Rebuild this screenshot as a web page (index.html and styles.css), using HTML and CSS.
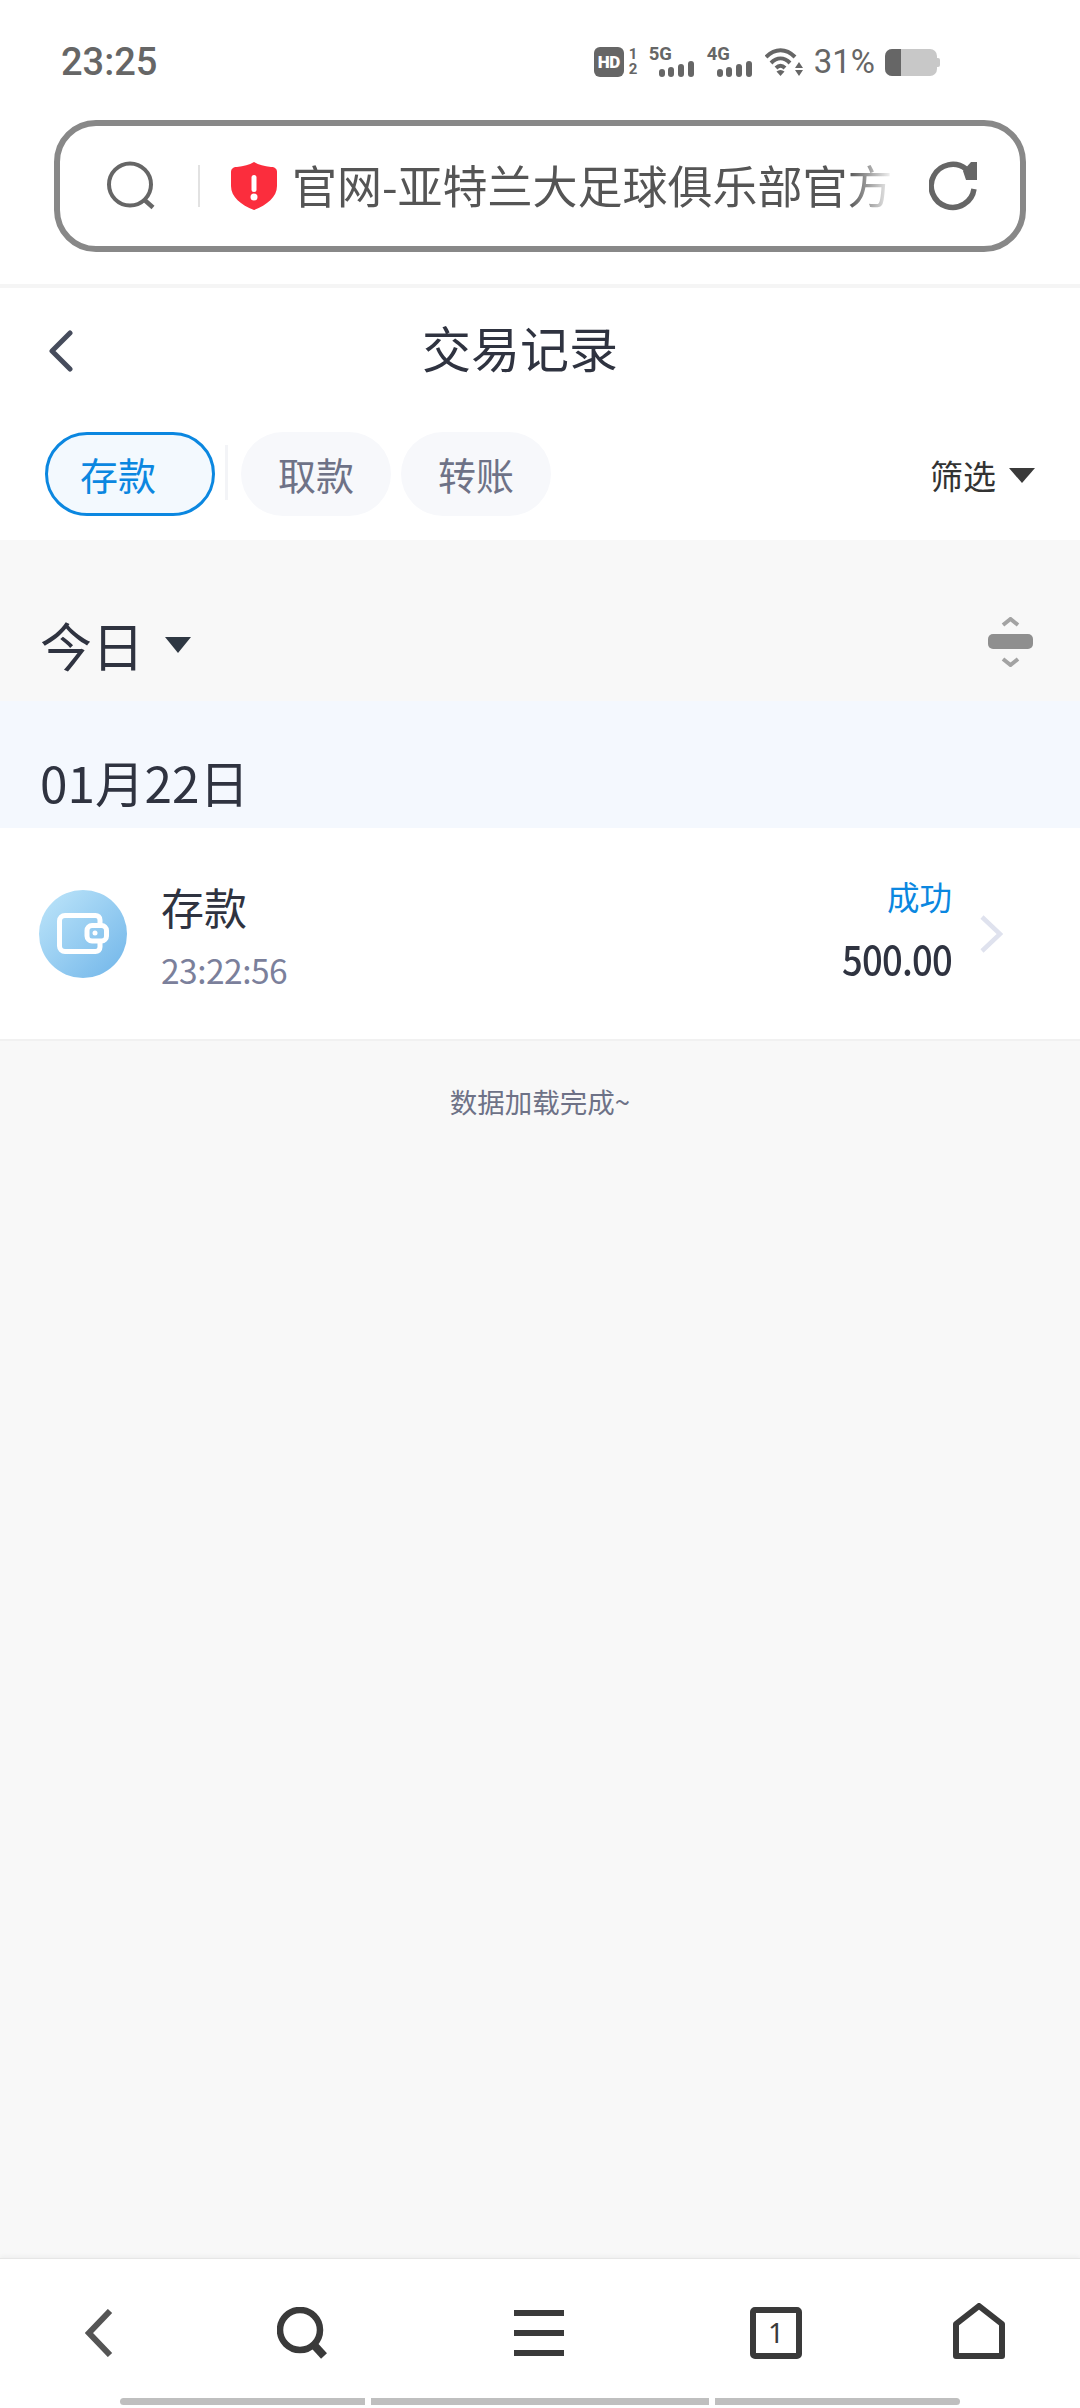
FILE: index.html
```html
<!DOCTYPE html>
<html lang="zh-CN">
<head>
<meta charset="utf-8">
<title>交易记录</title>
<link rel="stylesheet" href="styles.css">
</head>
<body>
<div class="page">
  <header class="status">
    <span class="clock">23:25</span>
    <div class="status-icons">
      <span class="hd">HD</span>
      <span class="sims"><span>1</span><span>2</span></span>
      <span class="net net-first"><span class="net-label">5G</span>
        <svg class="net-bars" width="35" height="16" viewBox="0 0 35 16"><rect x="0" y="8" width="6" height="8" rx="3"/><rect x="9" y="6" width="6" height="10" rx="3"/><rect x="19" y="3" width="6" height="13" rx="3"/><rect x="29" y="0" width="6" height="16" rx="3"/></svg></span>
      <span class="net net-second"><span class="net-label">4G</span>
        <svg class="net-bars" width="35" height="16" viewBox="0 0 35 16"><rect x="0" y="8" width="6" height="8" rx="3"/><rect x="9" y="6" width="6" height="10" rx="3"/><rect x="19" y="3" width="6" height="13" rx="3"/><rect x="29" y="0" width="6" height="16" rx="3"/></svg></span>
      <svg class="wifi" width="38" height="30" viewBox="0 0 38 30" fill="none" stroke="#666" stroke-width="4"><path d="M1 10C10 1 21 1 30 10"/><path d="M6 16C12 10 19 10 25 16"/><path d="M11 21C14 18 17 18 20 21"/><path d="M15.500 29L11.500 24.500C14 22.500 17 22.500 19.500 24.500Z" fill="#666" stroke="none"/><path d="M34 15L38 21H30ZM34 29L30 23H38Z" fill="#666" stroke="none"/></svg>
      <span class="battery-pct">31%</span>
      <span class="battery"><span class="battery-fill"></span></span>
    </div>
  </header>

  <div class="url-wrap">
    <div class="url-bar">
      <svg class="url-search" width="50" height="50" viewBox="0 0 50 50" fill="none" stroke="#666" stroke-width="4"><circle cx="23" cy="23.500" r="21"/><path d="M37 38.500L46 46.500" stroke-width="4.500"/></svg>
      <span class="url-divider"></span>
      <svg class="shield" width="46" height="50" viewBox="0 0 46 50"><path d="M23 1C28 4 33 5 40 6C44 6 46 8 46 11V25C46 36 36 44 23 49C10 44 0 36 0 25V11C0 8 2 6 6 6C13 5 18 4 23 1Z" fill="#fb2d3d"/><rect x="20.500" y="14" width="5" height="17" rx="2.500" fill="#fff"/><circle cx="23" cy="36" r="3.500" fill="#fff"/></svg>
      <span class="url-text">官网-亚特兰大足球俱乐部官方</span>
      <svg class="reload" width="50" height="52" viewBox="0 0 50 52" fill="none" stroke="#666" stroke-width="5.500"><path d="M45 29A21.500 21.500 0 1 1 37 9"/><path d="M42 2H48V20H37L34 11Z" fill="#666" stroke="none"/></svg>
    </div>
  </div>
  <div class="sep"></div>

  <nav class="nav">
    <svg class="nav-back" width="26" height="42" viewBox="0 0 26 42" fill="none" stroke="#464c5c" stroke-width="5" stroke-linecap="round" stroke-linejoin="round"><path d="M22 3L4 21L22 39"/></svg>
    <h1 class="title">交易记录</h1>
  </nav>

  <section class="tabs">
    <span class="tab tab-active">存款</span>
    <span class="tab-divider"></span>
    <span class="tab">取款</span>
    <span class="tab tab-last">转账</span>
    <span class="filter">筛选<i class="tri tri-filter"></i></span>
  </section>

  <main class="content">
    <div class="range">
      <span class="range-label">今日</span><i class="tri tri-range"></i>
      <svg class="collapse" width="45" height="50" viewBox="0 0 45 50"><rect x="0" y="17" width="45" height="15" rx="5" fill="#8f8f8f"/><path d="M15 8L22.500 2L30 8M15 42L22.500 48L30 42" fill="none" stroke="#a3a3a3" stroke-width="4"/></svg>
    </div>
    <div class="date-band">01月22日</div>
    <div class="record">
      <div class="record-icon">
        <svg width="52" height="41" viewBox="0 0 52 41" fill="none" stroke="#fff" stroke-width="5"><path d="M43 11V7C43 4 41 2.500 38.500 2.500H8C5 2.500 2.500 5 2.500 8V33C2.500 36 5 38.500 8 38.500H38.500C41 38.500 43 37 43 34V30"/><rect x="30" y="12.500" width="19.500" height="15.500" rx="5"/><circle cx="38" cy="20" r="2.500" fill="#fff" stroke="none"/></svg>
      </div>
      <div class="record-main">
        <span class="record-name">存款</span>
        <span class="record-time">23:22:56</span>
      </div>
      <div class="record-side">
        <span class="record-state">成功</span>
        <span class="record-amount">500.00</span>
      </div>
      <svg class="record-arrow" width="24" height="38" viewBox="0 0 24 38" fill="none" stroke="#dfe2ee" stroke-width="4.500"><path d="M3 2L21 19L3 36"/></svg>
    </div>
    <p class="done">数据加载完成~</p>
  </main>

  <footer class="toolbar">
    <div class="tool-row">
      <svg width="28" height="48" viewBox="0 0 28 48" fill="none" stroke="#555" stroke-width="6"><path d="M25 2L4 24L25 46"/></svg>
      <svg width="52" height="52" viewBox="0 0 52 52" fill="none" stroke="#3a3a3a" stroke-width="6.500"><circle cx="23" cy="23" r="20"/><path d="M37 38L47 49" stroke-width="8"/></svg>
      <svg width="50" height="46" viewBox="0 0 50 46" fill="#3a3a3a"><rect width="50" height="6"/><rect y="20" width="50" height="6"/><rect y="40" width="50" height="6"/></svg>
      <span class="tabs-count">1</span>
      <svg class="tool-home" width="52" height="56" viewBox="0 0 52 56" fill="none" stroke="#3a3a3a" stroke-width="6" stroke-linejoin="round"><path d="M26 3L49 21V53H3V21Z"/></svg>
    </div>
    <div class="scroll">
      <span class="scroll-a"></span><span class="scroll-b"></span><span class="scroll-c"></span>
    </div>
  </footer>
</div>
</body>
</html>
```
FILE: styles.css
```css
* { box-sizing: border-box; }
html, body { margin: 0; padding: 0; }
body { font-family: "Noto Sans CJK SC", "Noto Sans", sans-serif; background: #fff; }
.page { width: 1080px; height: 2408px; display: flex; flex-direction: column; overflow: hidden; background: #f8f8f8; }

.status { height: 120px; background: #fff; display: flex; align-items: center; justify-content: space-between; padding: 4px 140px 0 61px; font-family: Roboto, sans-serif; color: #666; }
.clock { font-size: 38px; font-weight: 500; }
.status-icons { display: flex; align-items: center; flex: none; }
.hd { width: 30px; height: 30px; border-radius: 6px; background: #666; color: #fff; font-size: 17px; font-weight: 900; line-height: 30px; text-align: center; letter-spacing: -.5px; flex: none; }
.sims { display: flex; flex-direction: column; margin-left: 5px; width: 10px; font-size: 15px; font-weight: 700; line-height: 15px; flex: none; }
.net { position: relative; display: block; width: 45px; height: 30px; flex: none; }
.net-first { margin-left: 10px; }
.net-second { margin-left: 13px; }
.net-label { position: absolute; left: 0; top: -3px; font-size: 18.500px; font-weight: 700; line-height: 20px; }
.net-bars { position: absolute; left: 10px; bottom: 0; fill: #666; }
.wifi { margin-left: 13px; flex: none; }
.battery-pct { margin-left: 11px; font-size: 33px; font-weight: 400; line-height: 34px; }
.battery { position: relative; margin: 0 3px 0 10px; width: 52px; height: 27px; border-radius: 7px; background: #c8c8c8; flex: none; }
.battery::after { content: ""; position: absolute; right: -3px; top: 9px; width: 3px; height: 9px; border-radius: 0 2px 2px 0; background: #c8c8c8; }
.battery-fill { display: block; width: 16px; height: 100%; background: #666; border-radius: 7px 0 0 7px; }

.url-wrap { height: 164px; background: #fff; padding: 0 54px; }
.url-bar { height: 132px; border: 6px solid #888; border-radius: 42px; display: flex; align-items: center; padding-left: 47px; background: #fff; }
.url-search { flex: none; }
.url-divider { width: 2px; height: 42px; background: #e2e2e2; margin-left: 41px; flex: none; }
.shield { margin-left: 31px; flex: none; }
.url-text { width: 612px; margin: -2px 0 0 15px; white-space: nowrap; font-size: 45px; line-height: 60px; color: #555; -webkit-mask-image: linear-gradient(to right, #000 91%, rgba(0,0,0,.05) 98%); mask-image: linear-gradient(to right, #000 91%, rgba(0,0,0,.05) 98%); flex: none; }
.reload { margin-left: 25px; flex: none; }
.sep { height: 4px; background: #f5f5f5; }

.nav { height: 126px; background: #fff; display: flex; align-items: center; position: relative; padding-left: 48px; }
.title { width: 196px; margin: 0 0 8px 348px; font-size: 49px; font-weight: 400; line-height: 60px; color: #2f3340; white-space: nowrap; }
.nav-back { flex: none; }

.tabs { height: 126px; background: #fff; display: flex; align-items: flex-start; padding: 18px 45px 0 45px; }
.tab { width: 150px; height: 84px; border-radius: 42px; background: #f7f8fb; color: #6e7287; font-size: 38px; line-height: 84px; text-align: center; }
.tab-active { width: 170px; border: 3px solid #0b87e0; background: #f3f9fe; color: #0b87e0; line-height: 78px; padding-right: 24px; }
.tab-divider { width: 3px; height: 55px; margin: 13px 13px 0 10px; background: #f3f4f7; }
.tab-last { margin-left: 10px; }
.filter { margin-left: auto; margin-top: 19px; font-size: 33px; line-height: 48px; color: #333; display: flex; align-items: center; }
.tri { display: block; width: 0; height: 0; border-style: solid; border-color: transparent; }
.tri-filter { margin-left: 13px; border-width: 15px 13px 0; border-top-color: #3a3a3a; }

.content { flex: 1; display: flex; flex-direction: column; }
.range { height: 161px; display: flex; align-items: center; padding: 49px 47px 0 40px; position: relative; }
.range-label { font-size: 52px; line-height: 70px; color: #2f3340; }
.tri-range { margin-left: 21px; border-width: 16px 13px 0; border-top-color: #2f3843; }
.collapse { margin: 0 0 7px auto; }
.date-band { height: 127px; background: #f4f8fe; padding: 47px 0 0 40px; font-size: 49.500px; line-height: 68px; color: #2f3340; }
.record { height: 213px; background: #fff; border-bottom: 2px solid #f1f1f1; display: flex; align-items: center; padding: 0 0 0 39px; }
.record-icon { width: 88px; height: 88px; border-radius: 50%; background: linear-gradient(135deg, #bfe6fa, #70b5e9); display: flex; align-items: center; justify-content: center; flex: none; }
.record-main { display: flex; flex-direction: column; margin-left: 34px; }
.record-name { font-size: 43px; line-height: 60px; color: #2f3340; }
.record-time { font-size: 33.500px; line-height: 44px; margin-top: 12px; color: #7b809b; letter-spacing: -.5px; }
.record-side { margin: 0 0 7px auto; display: flex; flex-direction: column; align-items: flex-end; }
.record-state { font-size: 32.500px; line-height: 44px; color: #0b87e0; }
.record-amount { font-size: 40px; line-height: 56px; margin-top: 12px; font-weight: 500; color: #2f3340; letter-spacing: -.8px; transform: scaleX(.91); transform-origin: right center; }
.record-arrow { margin-left: 27px; margin-right: 77px; flex: none; }
.done { margin: 40px 0 0; text-align: center; font-size: 27.500px; line-height: 40px; color: #6e7287; }

.toolbar { height: 150px; background: #fff; border-top: 1px solid #e6e6e6; box-shadow: 0 -2px 4px rgba(0,0,0,.04); display: flex; flex-direction: column; flex: none; }
.tool-row { height: 139px; padding-top: 9px; display: grid; grid-template-columns: 198px 210px 262px 212px 194px; justify-items: center; align-items: center; }
.tool-home { margin-bottom: 4px; }
.tabs-count { width: 52px; height: 52px; border: 6px solid #3a3a3a; border-radius: 5px; font-family: "Noto Sans", sans-serif; font-size: 28px; line-height: 38px; text-align: center; color: #3a3a3a; }
.scroll { display: flex; gap: 6px; padding-left: 120px; }
.scroll span { height: 7px; background: #bfbfbf; }
.scroll-a { width: 245px; border-radius: 4px 0 0 4px; }
.scroll-b { width: 338px; }
.scroll-c { width: 245px; border-radius: 0 4px 4px 0; }
```
